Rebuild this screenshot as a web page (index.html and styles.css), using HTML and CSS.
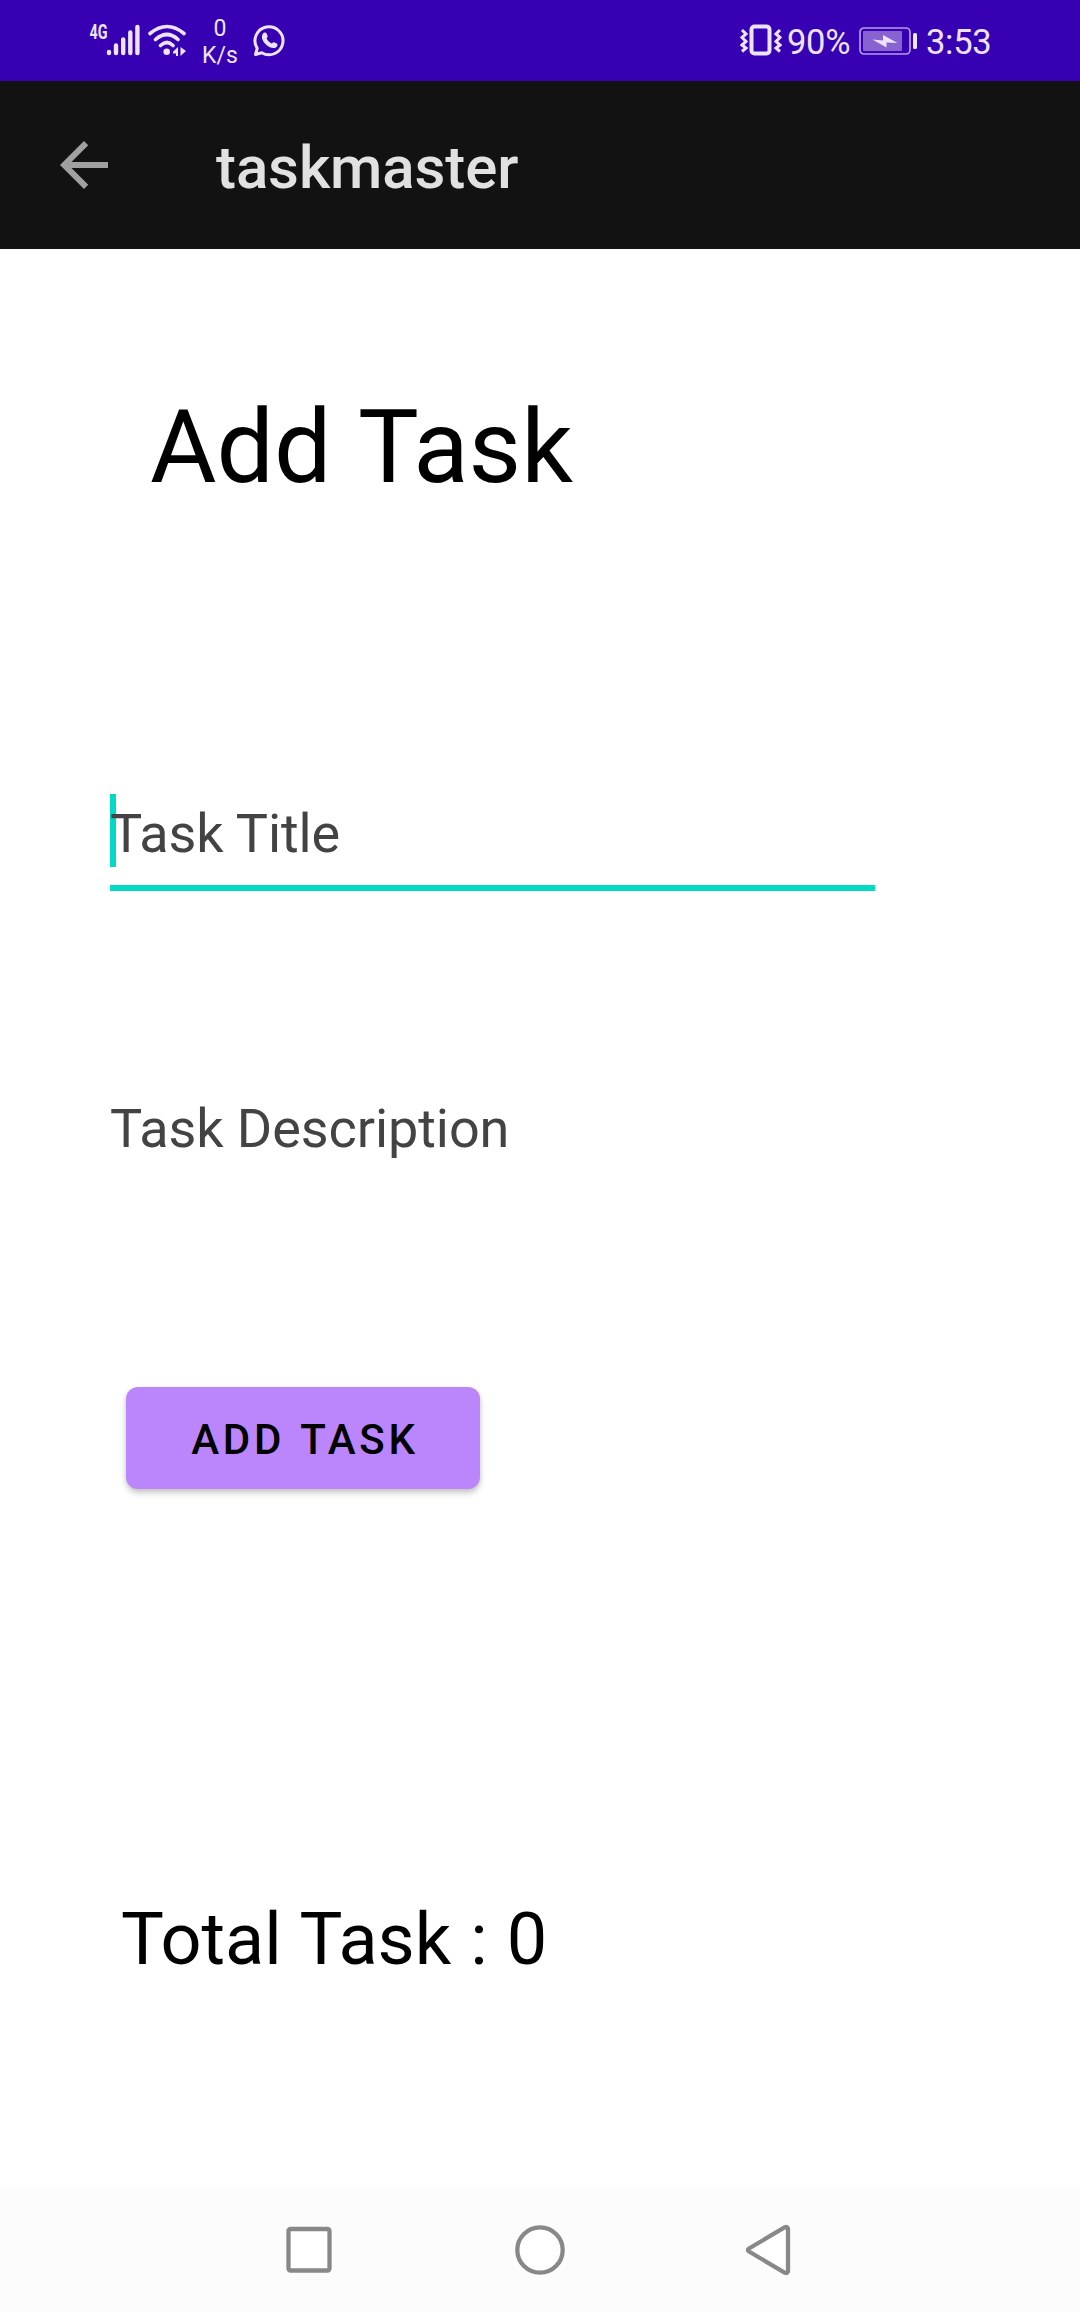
FILE: index.html
```html
<!DOCTYPE html>
<html lang="en">
<head>
<meta charset="utf-8">
<title>taskmaster</title>
<link rel="stylesheet" href="styles.css">
</head>
<body>
<header class="status">
  <svg class="signal" width="54" height="44" viewBox="0 0 54 44">
    <g fill="none" stroke="currentColor" stroke-width="4.4" stroke-linecap="round">
      <path d="M21 35v1M28 28.500v7.500M35.200 22.500v13.500M42.300 15.500v20.500M49.400 10v26"/>
    </g>
    <text class="net" x="1.500" y="21.500" textLength="18" lengthAdjust="spacingAndGlyphs">4G</text>
  </svg>
  <svg class="wifi" width="38" height="44" viewBox="0 0 38 44">
    <g fill="none" stroke="currentColor" stroke-width="3.600" stroke-linecap="round">
      <path d="M2 16.500Q19 2.500 36 16.500M7.500 22.500Q19 12.500 30 22.500M12.500 28.500Q19 22.500 25 28.500"/>
    </g>
    <circle cx="18.700" cy="34.700" r="3.300" fill="currentColor"/>
    <path d="M30 30v9h-2v-2.500h-3v-1.800zM32.500 30l5.500 4-5.500 5z" fill="currentColor"/>
  </svg>
  <div class="rate"><span>0</span><span>K/s</span></div>
  <svg class="chat" width="34" height="36" viewBox="0 0 34 36">
    <path d="M2.500 30.500l1.700-6.200A14 14 0 1 1 8.700 28.700z" fill="none" stroke="currentColor" stroke-width="3" stroke-linejoin="round"/>
    <path d="M10 9.500c1-1.500 3-1.500 3.600 0l1 2.500c.4 1-.9 2-1 2.600 1 2.200 2.800 3.900 5 4.900.8-.2 1.500-1.600 2.500-1.300l2.700 1.300c1.200.7.700 2.700-.5 3.700-2 1.500-4.600.9-7-.3-3.200-1.700-5.500-4.200-6.800-7.200-.8-2-.8-4.500.5-6.200z" fill="currentColor"/>
  </svg>
  <svg class="vibrate" width="42" height="34" viewBox="0 0 42 34">
    <rect x="11.500" y="3.500" width="18" height="27" rx="3" fill="none" stroke="currentColor" stroke-width="4"/>
    <path d="M2 7l4 4-4 3.500 4 4-4 3.500 4 3-4 3.500M40 7l-4 4 4 3.500-4 4 4 3.500-4 3 4 3.500" fill="none" stroke="currentColor" stroke-width="3"/>
  </svg>
  <span class="percent">90%</span>
  <svg class="battery" width="59" height="30" viewBox="0 0 59 30">
    <rect x="1" y="2" width="50" height="26" rx="4" fill="none" stroke="#b79ae6" stroke-width="1.700"/>
    <rect x="4" y="5" width="39" height="20" rx="1" fill="#8762d0"/>
    <path d="M13.500 13.500l10.500 1V9l14.500 8-11-.5V21.500z" fill="currentColor"/>
    <rect x="54" y="7" width="4" height="16" rx="1.500" fill="currentColor"/>
  </svg>
  <span class="clock">3:53</span>
</header>
<div class="appbar">
  <svg width="72" height="72" viewBox="0 0 24 24"><path fill="#a0a0a0" d="M20 11H7.830l5.590-5.590L12 4l-8 8 8 8 1.410-1.410L7.830 13H20v-2z"/></svg>
  <div class="appname">taskmaster</div>
</div>
<main class="content">
  <h1 class="heading">Add Task</h1>
  <div class="field focused"><span class="cursor"></span>Task Title</div>
  <div class="field">Task Description</div>
  <button class="add" type="button">ADD TASK</button>
  <p class="total">Total Task : 0</p>
</main>
<nav class="navbar">
  <svg width="52" height="52" viewBox="0 0 52 52"><rect x="5.500" y="5" width="41" height="41.500" rx="2" fill="#fff"/></svg>
  <svg width="52" height="52" viewBox="0 0 52 52"><circle cx="26" cy="26" r="22.700" fill="#fff"/></svg>
  <svg width="52" height="52" viewBox="0 0 52 52"><path d="M4 24.500Q1.800 26 4 27.500L39.500 48.500Q43 50 43 47V5Q43 2 39.500 3.500z" fill="#fff"/></svg>
</nav>
</body>
</html>
```
FILE: styles.css
```css
* { box-sizing: border-box; }
body {
  margin: 0;
  width: 1080px;
  height: 2312px;
  display: flex;
  flex-direction: column;
  background: #fff;
  color: #000;
  font-family: Roboto, "Liberation Sans", sans-serif;
}
svg { display: block; flex: none; }

.status {
  height: 81px;
  flex: none;
  display: flex;
  align-items: flex-start;
  padding-left: 88px;
  background: #3700b3;
  color: #eee3fd;
}
.signal { margin-top: 17px; }
.net { font: bold 20px Roboto, sans-serif; fill: currentColor; }
.wifi { margin: 17px 0 0 6px; }
.rate {
  width: 40px;
  margin: 15px 0 0 14px;
  display: flex;
  flex-direction: column;
  align-items: center;
  font-size: 23px;
  line-height: 27px;
}
.chat { margin: 24px 0 0 13px; }
.vibrate { margin: 23px 0 0 453px; }
.percent, .clock { font-size: 34.5px; line-height: 40px; margin-top: 22px; white-space: nowrap; letter-spacing: -.3px; }
.percent { width: 64px; margin-left: 5px; }
.battery { margin: 26px 0 0 8px; }
.clock { margin-left: 8px; }

.appbar {
  height: 168px;
  flex: none;
  display: flex;
  align-items: center;
  padding-left: 48px;
  background: #121212;
  color: #e1e1e1;
}
.appname { margin: 5px 0 0 96px; font-size: 60px; font-weight: 500; line-height: 70px; letter-spacing: -.1px; }

.content {
  flex: 1;
  display: flex;
  flex-direction: column;
  align-items: flex-start;
  padding: 138px 110px 0;
}
.heading { margin: 0 0 0 40px; font-size: 102px; font-weight: 400; line-height: 120px; word-spacing: 3px; }
.field {
  position: relative;
  width: 765px;
  height: 90px;
  margin-top: 205px;
  font-size: 54px;
  line-height: 66px;
  letter-spacing: -.08px;
  color: #434343;
}
.focused { margin-top: 294px; border-bottom: 6px solid #03dac5; }
.cursor {
  position: absolute;
  z-index: -1;
  left: 0;
  top: -7px;
  width: 6px;
  height: 73px;
  background: #03dac5;
}
.add {
  width: 354px;
  height: 102px;
  margin: 201px 0 0 16px;
  padding: 4px 0 0 4px;
  border: 0;
  border-radius: 12px;
  background: #bb86fc;
  box-shadow: 0 4px 6px rgba(0, 0, 0, .2), 0 1px 4px rgba(0, 0, 0, .08);
  font: 500 42px/50px Roboto, sans-serif;
  letter-spacing: 3.75px;
  word-spacing: 2px;
  color: #000;
}
.total { margin: 408px 0 0 11px; font-size: 72px; line-height: 86px; word-spacing: 1.2px; }

.navbar {
  height: 124px;
  flex: none;
  display: flex;
  justify-content: center;
  align-items: center;
  gap: 179px;
  background: #fcfcfc;
  fill: none;
  stroke: #888;
  stroke-width: 4.3px;
}
```
